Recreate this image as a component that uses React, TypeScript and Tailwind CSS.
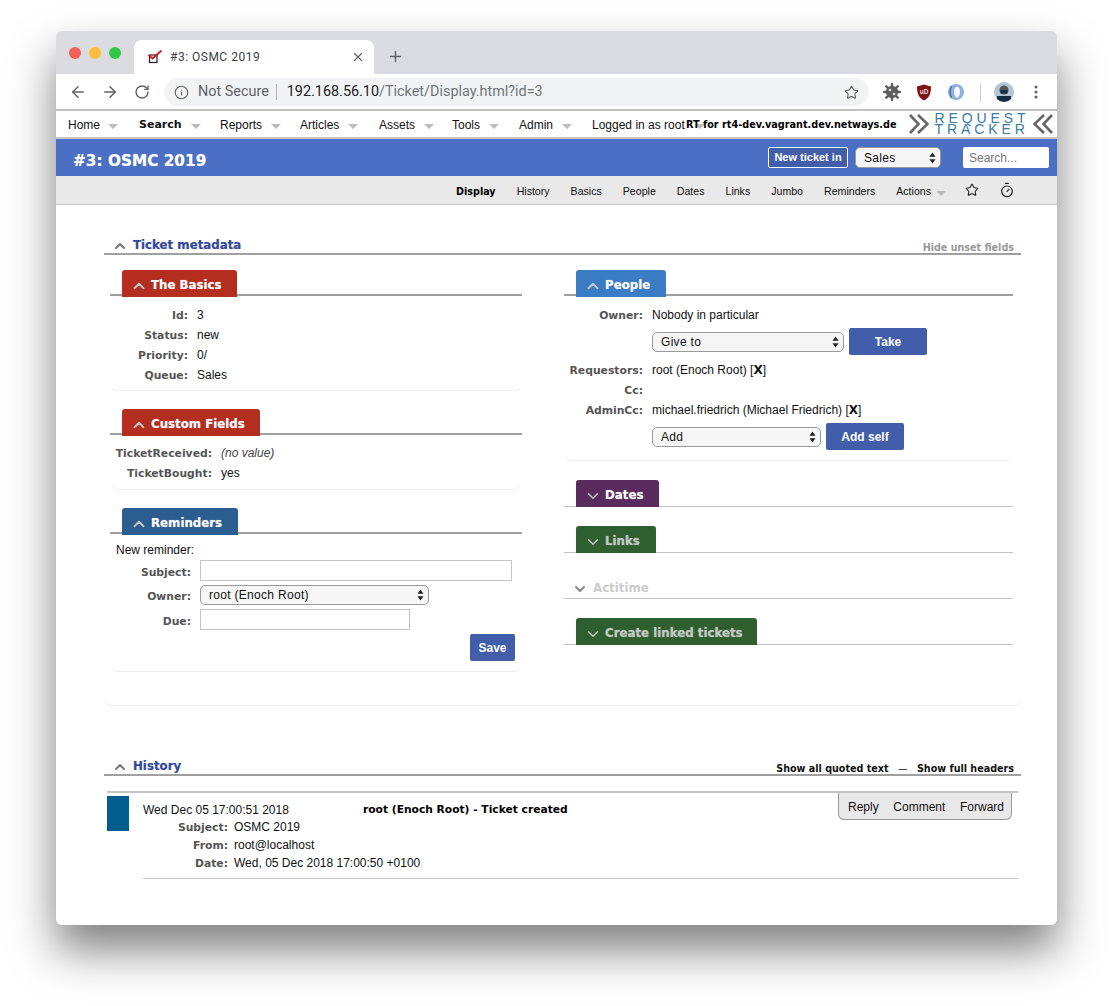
import { ArrowLeft, ArrowRight, ChevronDown, ChevronUp, Info, Plus, RotateCw, Star, Timer, X } from "lucide-react";

const menuItems = [
  { label: "Home", width: "w-[71px]", gap: "ml-[8px]" },
  { label: "Search", width: "w-[81px]", gap: "ml-[9px]", bold: true },
  { label: "Reports", width: "w-[80px]", gap: "ml-[9px]" },
  { label: "Articles", width: "w-[79px]", gap: "ml-[9px]" },
  { label: "Assets", width: "w-[73px]", gap: "ml-[9px]" },
  { label: "Tools", width: "w-[67px]", gap: "ml-[9px]" },
  { label: "Admin", width: "w-[73px]", gap: "ml-[9px]" },
];

const subNav = ["History", "Basics", "People", "Dates", "Links", "Jumbo", "Reminders"];

const labelClass = "pt-[2px] font-['DejaVu_Sans',sans-serif] text-[10.8px] font-bold text-[#555]";
const formLabelClass = "w-[82px] pt-[5px] pr-[1px] text-right font-['DejaVu_Sans',sans-serif] text-[10.8px] font-bold text-[#555]";

function Caret() {
  return <span className="inline-block h-0 w-0 border-x-[5px] border-t-[5px] border-x-transparent border-t-[#bbb]" />;
}

function SelectArrows() {
  return (
    <svg width="7" height="12" viewBox="0 0 7 12" className="pointer-events-none absolute top-1/2 right-[5px] -translate-y-1/2">
      <path d="M3.5 0.5 L6.5 4.8 H0.5 Z M3.5 11.5 L6.5 7.2 H0.5 Z" fill="#222" />
    </svg>
  );
}

function FakeSelect({ value, className }: { value: string; className: string }) {
  return (
    <div className={`relative ${className}`}>
      <select
        defaultValue={value}
        className="block h-full w-full appearance-none rounded-[5px] border border-[#999] bg-[#f6f6f6] pl-[8px] text-[12px] tracking-[0.3px] text-[#111] outline-none"
      >
        <option>{value}</option>
      </select>
      <SelectArrows />
    </div>
  );
}

function PrimaryButton({ label, className }: { label: string; className: string }) {
  return (
    <button className={`rounded-[2px] bg-[#425eab] text-[12px] font-bold text-white ${className}`}>{label}</button>
  );
}

function TabHeader({
  title,
  color,
  open = true,
  dim = false,
  width,
}: {
  title: string;
  color: string;
  open?: boolean;
  dim?: boolean;
  width: string;
}) {
  return (
    <div className={open ? "h-[26px] border-b-2 border-[#a0a0a0]" : "h-[27px] border-b border-[#c4c4c4]"}>
      <div className={`ml-[12px] flex h-[27px] items-center rounded-t-[3px] pt-[5px] pl-[8px] ${color} ${width}`}>
        {open ? (
          <ChevronUp size={18} strokeWidth={2.5} className="shrink-0 text-[#c4c4c4]" />
        ) : (
          <ChevronDown size={18} strokeWidth={2} className="shrink-0 text-[#c4c4c4]" />
        )}
        <span
          className={`ml-[3px] font-['DejaVu_Sans',sans-serif] text-[11.8px] font-bold whitespace-nowrap [text-shadow:0_0_1px_rgba(255,255,255,0.45)] ${dim ? "text-[#c4c8c4]" : "text-white"}`}
        >
          {title}
        </span>
      </div>
    </div>
  );
}

function Field({ label, labelWidth, children }: { label: string; labelWidth: string; children?: React.ReactNode }) {
  return (
    <div className="flex h-[20px] items-center">
      <div className={`${labelWidth} shrink-0 pr-[9px] text-right ${labelClass}`}>{label}</div>
      <div className="text-[12px] text-[#111]">{children}</div>
    </div>
  );
}

function SectionTitle({ title, right }: { title: string; right: React.ReactNode }) {
  return (
    <div className="flex h-[21px] items-center border-b-2 border-[#a0a0a0] pt-[4px] pr-[7px]">
      <ChevronUp size={16} strokeWidth={3} className="ml-[8px] shrink-0 text-[#777]" />
      <span className="ml-[5px] font-['DejaVu_Sans',sans-serif] text-[11.8px] font-bold text-[#35499a] [text-shadow:0_0_1px_rgba(53,73,154,0.4)]">
        {title}
      </span>
      <div className="ml-auto self-end leading-[10px]">{right}</div>
    </div>
  );
}

function TabStrip() {
  return (
    <div className="flex h-[43px] bg-[#dadce0] pt-[9px]">
      <div className="ml-[13px] flex h-[24px] gap-[8px] pt-[7px]">
        <span className="h-[12px] w-[12px] rounded-full bg-[#f25f58]" />
        <span className="h-[12px] w-[12px] rounded-full bg-[#fbbe3c]" />
        <span className="h-[12px] w-[12px] rounded-full bg-[#33c748]" />
      </div>
      <div className="ml-[13px] flex h-[34px] w-[240px] items-center rounded-t-[8px] bg-white pl-[14px]">
        <svg width="15" height="14" viewBox="0 0 15 14">
          <rect x="1.5" y="5" width="7.5" height="7.5" fill="none" stroke="#222" strokeWidth="1.2" />
          <path d="M0.5 5 L4.5 8.5 L13.5 0.5" fill="none" stroke="#d9141c" strokeWidth="1.8" />
        </svg>
        <span className="ml-[7px] font-['Roboto',sans-serif] text-[12px] tracking-[0.5px] text-[#3c4043]">#3: OSMC 2019</span>
        <X size={14} className="ml-auto mr-[9px] text-[#5f6368]" />
      </div>
      <Plus size={17} strokeWidth={2} className="ml-[13px] mt-[8px] text-[#5f6368]" />
    </div>
  );
}

function Toolbar() {
  return (
    <div className="flex h-[37px] items-center border-b-2 border-[#c0c0c0] bg-white pt-[1px]">
      <ArrowLeft size={18} strokeWidth={2} className="ml-[13px] text-[#5f6368]" />
      <ArrowRight size={18} strokeWidth={2} className="ml-[14px] text-[#5f6368]" />
      <RotateCw size={16} strokeWidth={2} className="ml-[15px] text-[#5f6368]" />
      <div className="ml-[14px] flex h-[28px] w-[705px] items-center rounded-full bg-[#f1f3f4] font-['Roboto',sans-serif] text-[14.4px]">
        <Info size={15} strokeWidth={1.8} className="ml-[10px] text-[#5f6368]" />
        <span className="ml-[9px] text-[#5f6368]">Not Secure</span>
        <span className="ml-[7px] h-[16px] w-px bg-[#b0b3b7]" />
        <span className="ml-[10px] text-[#202124]">192.168.56.10</span>
        <span className="text-[#70757a]">/Ticket/Display.html?id=3</span>
        <Star size={15} strokeWidth={1.8} className="ml-auto mr-[10px] text-[#5f6368]" />
      </div>
      <svg width="18" height="18" viewBox="0 0 18 18" className="ml-[14px]">
        <circle cx="9" cy="9" r="6.2" fill="#5f5f5f" />
        <path d="M9 1V17M1 9H17M3.3 3.3L14.7 14.7M14.7 3.3L3.3 14.7" stroke="#5f5f5f" strokeWidth="2.4" strokeLinecap="round" />
        <circle cx="7" cy="7" r="1.3" fill="#ddd" />
        <circle cx="11" cy="11" r="1.3" fill="#ddd" />
      </svg>
      <svg width="16" height="17" viewBox="0 0 16 17" className="ml-[15px]">
        <path d="M8 0.5 L15 2.5 C15 10 13 14 8 16.5 C3 14 1 10 1 2.5 Z" fill="#7f1216" />
        <text x="8" y="10" textAnchor="middle" fontSize="6.5" fontWeight="700" fill="#f4dcdc" fontFamily="Liberation Sans, sans-serif">uD</text>
      </svg>
      <svg width="18" height="18" viewBox="0 0 18 18" className="ml-[15px]">
        <circle cx="9" cy="9" r="8" fill="#8fb2dc" />
        <path d="M4.5 3 Q1.8 9 4.5 15" stroke="#4d78ad" strokeWidth="1.6" fill="none" />
        <ellipse cx="10" cy="9" rx="3" ry="5.6" fill="#f4f7fb" />
      </svg>
      <span className="ml-[15px] h-[19px] w-px bg-[#d0d0d0]" />
      <svg width="20" height="20" viewBox="0 0 20 20" className="ml-[13px]">
        <clipPath id="avatarClip"><circle cx="10" cy="10" r="10" /></clipPath>
        <g clipPath="url(#avatarClip)">
          <rect width="20" height="20" fill="#b4c6d4" />
          <circle cx="10" cy="8" r="4.6" fill="#55565a" />
          <rect x="6.5" y="8" width="7" height="3.5" fill="#15304a" />
          <rect x="3" y="14" width="14" height="7" fill="#162a42" />
        </g>
      </svg>
      <svg width="4" height="14" viewBox="0 0 4 14" className="ml-[20px]">
        <circle cx="2" cy="2" r="1.5" fill="#5f6368" />
        <circle cx="2" cy="7" r="1.5" fill="#5f6368" />
        <circle cx="2" cy="12" r="1.5" fill="#5f6368" />
      </svg>
    </div>
  );
}

function MenuBar() {
  return (
    <div className="flex h-[28px] items-center border-b-2 border-[#c8c8c8] bg-white pl-[12px] text-[12px] text-[#111]">
      {menuItems.map((item) => (
        <div key={item.label} className={`flex shrink-0 items-center ${item.width}`}>
          <span className={item.bold ? "mt-[2px] font-['DejaVu_Sans',sans-serif] text-[11px] font-bold" : "mt-[2px]"}>
            {item.label}
          </span>
          <span className={`${item.gap} mt-[4px] flex`}>
            <Caret />
          </span>
        </div>
      ))}
      <span className="mt-[2px] w-[94px] shrink-0 whitespace-nowrap">Logged in as root</span>
      <span className="mt-[4px] ml-[9px] flex shrink-0">
        <Caret />
      </span>
      <span className="mt-[3px] -ml-[19px] shrink-0 font-['DejaVu_Sans',sans-serif] text-[9.7px] font-bold whitespace-nowrap text-black">
        RT for rt4-dev.vagrant.dev.netways.de
      </span>
      <svg width="20" height="20" viewBox="0 0 20 20" className="ml-[13px] shrink-0">
        <path d="M1 1 L9.5 10 L1 19 M9 1 L18.5 10 L9 19" fill="none" stroke="#666" strokeWidth="2.6" />
      </svg>
      <div className="ml-[5px] flex w-[94px] shrink-0 flex-col font-['Liberation_Sans',sans-serif] text-[14px] leading-[11.5px] text-[#3a7ca5]">
        <span className="tracking-[3.9px] whitespace-nowrap">REQUEST</span>
        <span className="tracking-[3.9px] whitespace-nowrap">TRACKER</span>
      </div>
      <svg width="20" height="20" viewBox="0 0 20 20" className="ml-[5px] shrink-0">
        <path d="M19 1 L10.5 10 L19 19 M11 1 L1.5 10 L11 19" fill="none" stroke="#666" strokeWidth="2.6" />
      </svg>
    </div>
  );
}

function TitleBand() {
  return (
    <div className="flex h-[37px] items-center bg-[#4c6fc6] pr-[8px] pl-[17px]">
      <span className="mt-[8px] font-['DejaVu_Sans',sans-serif] text-[15.3px] font-bold text-white [text-shadow:0_0_1px_rgba(255,255,255,0.5)]">
        #3: OSMC 2019
      </span>
      <button className="ml-auto h-[21px] w-[80px] rounded-[2px] border border-white bg-[#425eab] text-[11px] font-bold text-white">
        New ticket in
      </button>
      <FakeSelect value="Sales" className="ml-[7px] h-[21px] w-[86px]" />
      <input
        readOnly
        placeholder="Search..."
        className="ml-[22px] h-[21px] w-[86px] rounded-[2px] bg-white pl-[6px] text-[12px] outline-none placeholder:text-[#777]"
      />
    </div>
  );
}

function SubNav() {
  return (
    <div className="flex h-[29px] items-center justify-end gap-[21px] border-b border-[#c4c4c4] bg-[#e9e9e9] pr-[42px] text-[10.6px] text-[#111]">
      <span className="mt-[4px] font-['DejaVu_Sans',sans-serif] text-[9.6px] font-bold text-black">Display</span>
      {subNav.map((item) => (
        <span key={item} className="mt-[4px]">
          {item}
        </span>
      ))}
      <span className="mt-[4px] flex items-center gap-[5px]">
        Actions
        <span className="mt-[3px] flex">
          <Caret />
        </span>
      </span>
      <Star size={14} strokeWidth={1.8} className="-ml-[2px] text-[#222]" />
      <Timer size={16} strokeWidth={1.8} className="-ml-[1px] text-[#222]" />
    </div>
  );
}

function LeftColumn() {
  return (
    <div className="w-[412px]">
      <TabHeader title="The Basics" color="bg-[#b42e20]" width="w-[115px]" />
      <div className="h-[95px] rounded-b-[8px] border-b border-[#eee] pt-[9px]">
        <Field label="Id:" labelWidth="w-[87px]">3</Field>
        <Field label="Status:" labelWidth="w-[87px]">new</Field>
        <Field label="Priority:" labelWidth="w-[87px]">0/</Field>
        <Field label="Queue:" labelWidth="w-[87px]">Sales</Field>
      </div>
      <div className="mt-[18px]">
        <TabHeader title="Custom Fields" color="bg-[#b42e20]" width="w-[138px]" />
      </div>
      <div className="h-[55px] rounded-b-[8px] border-b border-[#eee] pt-[8px]">
        <Field label="TicketReceived:" labelWidth="w-[111px]">
          <span className="text-[#444] italic">(no value)</span>
        </Field>
        <Field label="TicketBought:" labelWidth="w-[111px]">yes</Field>
      </div>
      <div className="mt-[18px]">
        <TabHeader title="Reminders" color="bg-[#2c5d90]" width="w-[116px]" />
      </div>
      <div className="h-[138px] rounded-b-[8px] border-b border-[#eee] pt-[8px]">
        <div className="pl-[6px] text-[12px] leading-[17px] text-[#111]">New reminder:</div>
        <div className="mt-[1px] flex h-[21px] items-center">
          <div className={formLabelClass}>Subject:</div>
          <input readOnly className="ml-[8px] h-[21px] w-[312px] border border-[#c4c4c4] bg-white outline-none" />
        </div>
        <div className="mt-[4px] flex h-[20px] items-center">
          <div className={formLabelClass}>Owner:</div>
          <FakeSelect value="root (Enoch Root)" className="ml-[8px] h-[20px] w-[229px]" />
        </div>
        <div className="mt-[4px] flex h-[21px] items-center">
          <div className={formLabelClass}>Due:</div>
          <input readOnly className="ml-[8px] h-[21px] w-[210px] border border-[#c4c4c4] bg-white outline-none" />
        </div>
        <div className="mt-[4px] flex justify-end pr-[7px]">
          <PrimaryButton label="Save" className="h-[27px] w-[45px]" />
        </div>
      </div>
    </div>
  );
}

function RightColumn() {
  return (
    <div className="w-[449px]">
      <TabHeader title="People" color="bg-[#3a7dc4]" width="w-[90px]" />
      <div className="h-[165px] rounded-b-[8px] border-b border-[#eee] pt-[9px]">
        <Field label="Owner:" labelWidth="w-[88px]">Nobody in particular</Field>
        <div className="mt-[3px] ml-[88px] flex items-center gap-[5px]">
          <FakeSelect value="Give to" className="h-[20px] w-[192px]" />
          <PrimaryButton label="Take" className="h-[27px] w-[78px]" />
        </div>
        <div className="mt-[5px]">
          <Field label="Requestors:" labelWidth="w-[88px]">
            root (Enoch Root) [<b className="font-['DejaVu_Sans',sans-serif]">X</b>]
          </Field>
          <Field label="Cc:" labelWidth="w-[88px]" />
          <Field label="AdminCc:" labelWidth="w-[88px]">
            michael.friedrich (Michael Friedrich) [<b className="font-['DejaVu_Sans',sans-serif]">X</b>]
          </Field>
        </div>
        <div className="mt-[3px] ml-[88px] flex items-center gap-[5px]">
          <FakeSelect value="Add" className="h-[20px] w-[169px]" />
          <PrimaryButton label="Add self" className="h-[27px] w-[78px]" />
        </div>
      </div>
      <div className="mt-[19px]">
        <TabHeader title="Dates" color="bg-[#5a2c5d]" open={false} width="w-[83px]" />
      </div>
      <div className="mt-[19px]">
        <TabHeader title="Links" color="bg-[#2f5f2f]" open={false} dim width="w-[80px]" />
      </div>
      <div className="mt-[19px] flex h-[27px] items-center border-b border-[#c4c4c4] pt-[7px] pl-[8px]">
        <ChevronDown size={16} strokeWidth={3} className="shrink-0 text-[#888]" />
        <span className="ml-[5px] font-['DejaVu_Sans',sans-serif] text-[11.8px] font-bold text-[#ccc]">Actitime</span>
      </div>
      <div className="mt-[19px]">
        <TabHeader title="Create linked tickets" color="bg-[#2f5f2f]" open={false} dim width="w-[181px]" />
      </div>
    </div>
  );
}

function HistorySection() {
  return (
    <div className="mt-[49px] w-[917px]">
      <SectionTitle
        title="History"
        right={
          <span className="font-['DejaVu_Sans',sans-serif] text-[9.6px] font-bold text-[#111]">
            Show all quoted text <span className="mx-[6px] font-normal">—</span> Show full headers
          </span>
        }
      />
      <div className="mt-[15px] ml-[3px] w-[911px] border-t-[2px] border-[#c4c4c4]">
        <div className="flex">
          <div className="mt-[3px] h-[35px] w-[22px] shrink-0 bg-[#005e8f]" />
          <div className="ml-[14px] flex-1">
            <div className="relative border-b border-[#c8c8c8] pt-[8px] pb-[6px]">
              <div className="flex h-[17px] items-center text-[12px] text-[#111]">
                <span className="w-[220px]">Wed Dec 05 17:00:51 2018</span>
                <span className="mt-[2px] font-['DejaVu_Sans',sans-serif] text-[10.7px] font-bold text-black">
                  root (Enoch Root) - Ticket created
                </span>
              </div>
              <div className="flex h-[18px] items-center text-[12px] text-[#111]">
                <div className={`w-[91px] pr-[6px] text-right ${labelClass}`}>Subject:</div>OSMC 2019
              </div>
              <div className="flex h-[18px] items-center text-[12px] text-[#111]">
                <div className={`w-[91px] pr-[6px] text-right ${labelClass}`}>From:</div>root@localhost
              </div>
              <div className="flex h-[18px] items-center text-[12px] text-[#111]">
                <div className={`w-[91px] pr-[6px] text-right ${labelClass}`}>Date:</div>Wed, 05 Dec 2018 17:00:50 +0100
              </div>
              <div className="absolute top-0 right-[6px] flex h-[27px] w-[174px] items-center justify-between rounded-b-[6px] border border-t-0 border-[#999] bg-[#e9e9e9] pt-[2px] pr-[7px] pl-[9px] text-[12px] text-[#111]">
                <span>Reply</span>
                <span>Comment</span>
                <span>Forward</span>
              </div>
            </div>
          </div>
        </div>
      </div>
    </div>
  );
}

export default function App() {
  return (
    <div className="h-[1006px] overflow-hidden bg-white pt-[31px] pl-[56px] font-['Liberation_Sans',Arial,sans-serif]">
      <div className="h-[894px] w-[1001px] overflow-hidden rounded-[6px] bg-white shadow-[0_25px_45px_rgba(0,0,0,0.5)]">
        <TabStrip />
        <Toolbar />
        <MenuBar />
        <TitleBand />
        <SubNav />
        <div className="px-[48px] pt-[29px]">
          <div className="w-[917px] rounded-b-[8px] border-b border-[#eee] pb-[33px]">
            <SectionTitle
              title="Ticket metadata"
              right={<span className="font-['DejaVu_Sans',sans-serif] text-[9.6px] font-bold text-[#999]">Hide unset fields</span>}
            />
            <div className="mt-[15px] flex gap-[42px] pl-[6px]">
              <LeftColumn />
              <RightColumn />
            </div>
          </div>
          <HistorySection />
        </div>
      </div>
    </div>
  );
}
